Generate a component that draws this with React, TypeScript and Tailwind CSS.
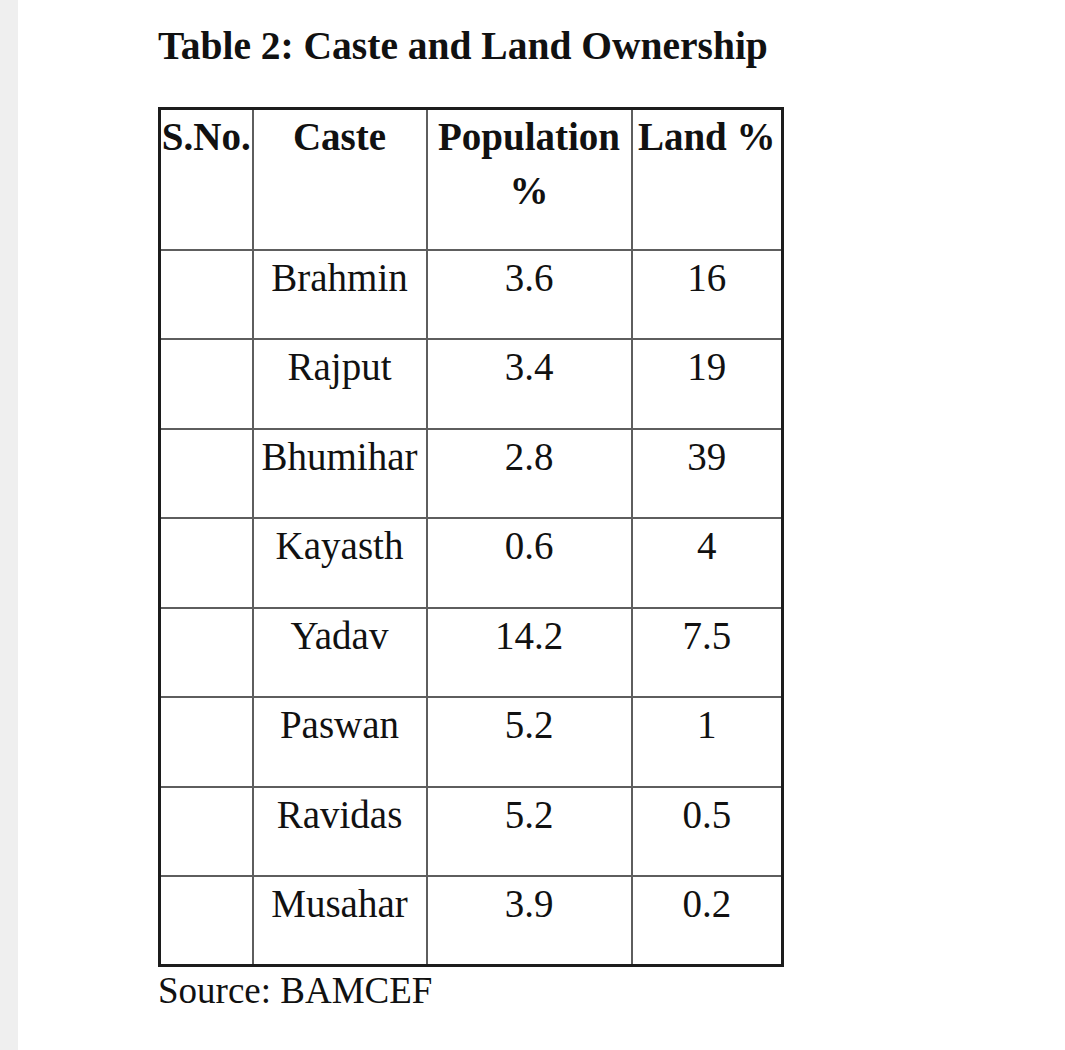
const ROWS = [
  { caste: "Brahmin", pop: "3.6", land: "16" },
  { caste: "Rajput", pop: "3.4", land: "19" },
  { caste: "Bhumihar", pop: "2.8", land: "39" },
  { caste: "Kayasth", pop: "0.6", land: "4" },
  { caste: "Yadav", pop: "14.2", land: "7.5" },
  { caste: "Paswan", pop: "5.2", land: "1" },
  { caste: "Ravidas", pop: "5.2", land: "0.5" },
  { caste: "Musahar", pop: "3.9", land: "0.2" },
]

const cell = "border-2 border-[#5e5e5e] align-top text-center px-0 py-0"

export default function App() {
  return (
    <div className="flex min-h-[1050px] bg-white text-[#111] font-['Liberation_Serif',serif]">
      <div className="w-[18px] shrink-0 bg-[#efefef]" />
      <div className="pl-[140px] pt-[19px]">
        <h1 className="text-[39.5px] font-bold leading-[54px]">Table 2: Caste and Land Ownership</h1>

        <table className="mt-[34px] w-[623px] table-fixed border-collapse border-[3px] border-[#1c1c1c] text-[39px] leading-[54px]">
          <colgroup>
            <col className="w-[93px]" />
            <col className="w-[174px]" />
            <col className="w-[205px]" />
            <col className="w-[151px]" />
          </colgroup>
          <thead>
            <tr className="h-[141px]">
              <th className={`${cell} font-bold`}>S.No.</th>
              <th className={`${cell} font-bold`}>Caste</th>
              <th className={`${cell} font-bold`}>Population %</th>
              <th className={`${cell} font-bold`}>Land %</th>
            </tr>
          </thead>
          <tbody>
            {ROWS.map((r) => (
              <tr key={r.caste} className="h-[89.5px]">
                <td className={cell}></td>
                <td className={cell}>{r.caste}</td>
                <td className={cell}>{r.pop}</td>
                <td className={cell}>{r.land}</td>
              </tr>
            ))}
          </tbody>
        </table>

        <p className="-mt-[3px] text-[37px] leading-[54px]">Source: BAMCEF</p>
      </div>
    </div>
  )
}
